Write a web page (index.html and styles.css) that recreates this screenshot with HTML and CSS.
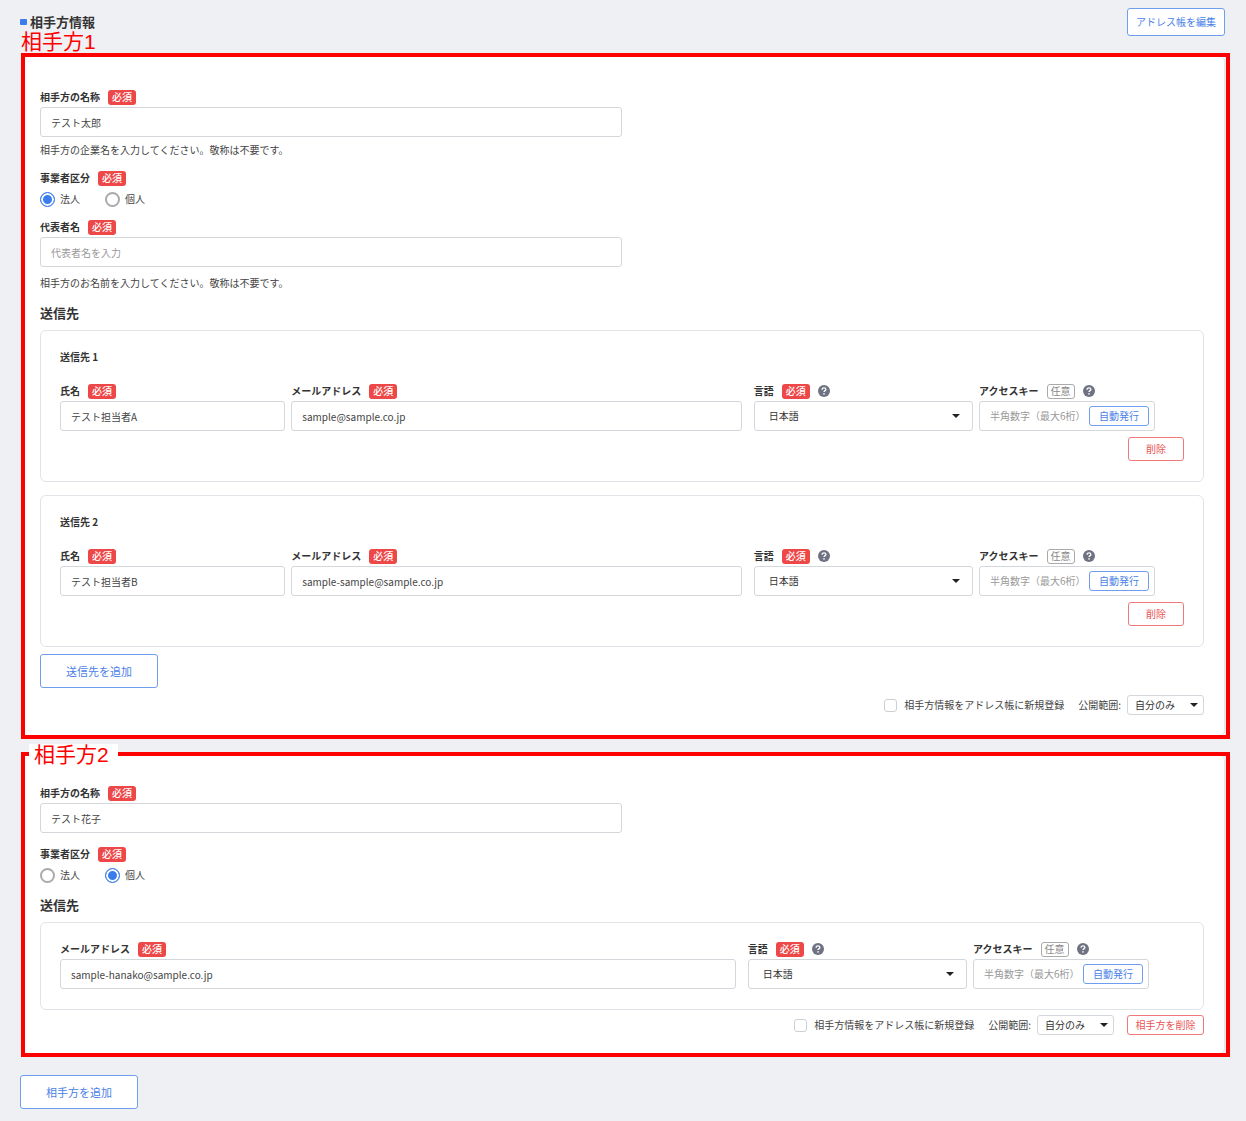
FILE: index.html
```html
<!DOCTYPE html>
<html lang="ja">
<head>
    <meta charset="UTF-8">
    <meta name="viewport" content="width=device-width, initial-scale=1.0">
    <title>相手方情報</title>
    <link rel="stylesheet" href="styles.css">
</head>
<body>
    <svg width="0" height="0" class="defs">
        <symbol id="help" viewBox="0 0 12 12">
            <circle cx="6" cy="6" r="6" fill="#6e7282"/>
            <path d="M4.1 4.7C4.1 3.4 5 2.8 6 2.8s1.9.6 1.9 1.6C7.9 5.6 6 5.7 6 7.1" fill="none" stroke="#fff" stroke-width="1.3"/>
            <circle cx="6" cy="8.9" r=".8" fill="#fff"/>
        </symbol>
    </svg>

    <header class="header">
        <h1>相手方情報</h1>
        <button type="button" class="btn btn-edit">アドレス帳を編集</button>
    </header>

    <main>
        <section class="frame">
            <div class="mark">相手方1</div>
            <form class="card">
                <div class="label-row">
                    <label for="name1">相手方の名称</label><span class="required">必須</span>
                </div>
                <input type="text" id="name1" class="text half" value="テスト太郎">
                <p class="note">相手方の企業名を入力してください。敬称は不要です。</p>

                <div class="label-row next">
                    <span>事業者区分</span><span class="required">必須</span>
                </div>
                <div class="radios">
                    <label><input type="radio" name="kind1" checked>法人</label>
                    <label><input type="radio" name="kind1">個人</label>
                </div>

                <div class="label-row next">
                    <label for="rep1">代表者名</label><span class="required">必須</span>
                </div>
                <input type="text" id="rep1" class="text half" placeholder="代表者名を入力">
                <p class="note note-rep">相手方のお名前を入力してください。敬称は不要です。</p>

                <h2>送信先</h2>
                <div class="box">
                    <h3>送信先 1</h3>
                    <div class="grid">
                        <div>
                            <div class="label-row"><label for="person1">氏名</label><span class="required">必須</span></div>
                            <input type="text" id="person1" class="text" value="テスト担当者A">
                        </div>
                        <div>
                            <div class="label-row"><label for="mail1">メールアドレス</label><span class="required">必須</span></div>
                            <input type="email" id="mail1" class="text" value="sample@sample.co.jp">
                        </div>
                        <div class="lang">
                            <div class="label-row"><label for="lang1">言語</label><span class="required">必須</span><svg class="help"><use href="#help"/></svg></div>
                            <div class="select"><select id="lang1"><option>日本語</option></select></div>
                        </div>
                        <div>
                            <div class="label-row"><label for="key1">アクセスキー</label><span class="optional">任意</span><svg class="help"><use href="#help"/></svg></div>
                            <div class="key"><input type="text" id="key1" placeholder="半角数字（最大6桁）"><button type="button" class="btn">自動発行</button></div>
                        </div>
                    </div>
                    <button type="button" class="btn btn-delete">削除</button>
                </div>

                <div class="box">
                    <h3>送信先 2</h3>
                    <div class="grid">
                        <div>
                            <div class="label-row"><label for="person2">氏名</label><span class="required">必須</span></div>
                            <input type="text" id="person2" class="text" value="テスト担当者B">
                        </div>
                        <div>
                            <div class="label-row"><label for="mail2">メールアドレス</label><span class="required">必須</span></div>
                            <input type="email" id="mail2" class="text" value="sample-sample@sample.co.jp">
                        </div>
                        <div class="lang">
                            <div class="label-row"><label for="lang2">言語</label><span class="required">必須</span><svg class="help"><use href="#help"/></svg></div>
                            <div class="select"><select id="lang2"><option>日本語</option></select></div>
                        </div>
                        <div>
                            <div class="label-row"><label for="key2">アクセスキー</label><span class="optional">任意</span><svg class="help"><use href="#help"/></svg></div>
                            <div class="key"><input type="text" id="key2" placeholder="半角数字（最大6桁）"><button type="button" class="btn">自動発行</button></div>
                        </div>
                    </div>
                    <button type="button" class="btn btn-delete">削除</button>
                </div>

                <button type="button" class="btn btn-add">送信先を追加</button>

                <div class="footer">
                    <label class="check"><input type="checkbox">相手方情報をアドレス帳に新規登録</label>
                    <label for="scope1">公開範囲:</label>
                    <div class="select small"><select id="scope1"><option>自分のみ</option></select></div>
                </div>
            </form>
        </section>

        <section class="frame second">
            <div class="mark">相手方2</div>
            <form class="card">
                <div class="label-row">
                    <label for="name2">相手方の名称</label><span class="required">必須</span>
                </div>
                <input type="text" id="name2" class="text half" value="テスト花子">

                <div class="label-row next">
                    <span>事業者区分</span><span class="required">必須</span>
                </div>
                <div class="radios">
                    <label><input type="radio" name="kind2">法人</label>
                    <label><input type="radio" name="kind2" checked>個人</label>
                </div>

                <h2>送信先</h2>
                <div class="box">
                    <div class="grid grid-personal">
                        <div>
                            <div class="label-row"><label for="mail3">メールアドレス</label><span class="required">必須</span></div>
                            <input type="email" id="mail3" class="text" value="sample-hanako@sample.co.jp">
                        </div>
                        <div class="lang">
                            <div class="label-row"><label for="lang3">言語</label><span class="required">必須</span><svg class="help"><use href="#help"/></svg></div>
                            <div class="select"><select id="lang3"><option>日本語</option></select></div>
                        </div>
                        <div>
                            <div class="label-row"><label for="key3">アクセスキー</label><span class="optional">任意</span><svg class="help"><use href="#help"/></svg></div>
                            <div class="key"><input type="text" id="key3" placeholder="半角数字（最大6桁）"><button type="button" class="btn">自動発行</button></div>
                        </div>
                    </div>
                </div>

                <div class="footer">
                    <label class="check"><input type="checkbox">相手方情報をアドレス帳に新規登録</label>
                    <label for="scope2">公開範囲:</label>
                    <div class="select small"><select id="scope2"><option>自分のみ</option></select></div>
                    <button type="button" class="btn btn-remove">相手方を削除</button>
                </div>
            </form>
        </section>

        <button type="button" class="btn btn-add btn-party">相手方を追加</button>
    </main>
</body>
</html>
```
FILE: styles.css
```css
* {
    box-sizing: border-box;
}

body {
    margin: 0;
    padding: 8px 16px 12px 20px;
    background-color: #eff0f4;
    color: #444;
    font-family: "Noto Sans CJK JP", sans-serif;
    font-size: 10px;
    line-height: 16px;
}

input, select, button {
    font: inherit;
    color: inherit;
}

h1, h2, h3, p {
    margin: 0;
}

.defs {
    position: absolute;
}

.header {
    display: flex;
    justify-content: space-between;
    align-items: center;
    padding-right: 5px;
    margin-bottom: 17px;
}

h1 {
    display: flex;
    align-items: center;
    gap: 3px;
    font-size: 13px;
    color: #333;
}

h1::before {
    content: "";
    width: 7px;
    height: 6px;
    border-radius: 1px;
    background-color: #3b7ded;
}

/* buttons */
.btn {
    display: block;
    padding: 0;
    border: 1px solid #6f9df0;
    border-radius: 3px;
    background-color: white;
    color: #4a7fe8;
    white-space: nowrap;
}

.btn-edit {
    width: 98px;
    height: 28px;
}

.btn-add {
    width: 118px;
    height: 34px;
    margin-top: 7px;
    font-size: 11px;
}

.btn-party {
    margin-top: 18px;
}

.btn-delete {
    width: 56px;
    height: 24px;
    margin: 6px 0 0 auto;
}

.btn-remove {
    width: 77px;
    height: 20px;
    margin-left: 7px;
}

.btn-delete, .btn-remove {
    border-color: #f07878;
    color: #e85555;
}

/* red frames */
.frame {
    position: relative;
    margin-left: 1px;
    border: 4px solid red;
    padding-right: 1px;
}

.second {
    margin-top: 13px;
}

.mark {
    position: absolute;
    left: -4px;
    top: -26px;
    color: red;
    font-family: "Liberation Sans", "Noto Sans CJK JP", sans-serif;
    font-size: 21px;
    line-height: 22px;
    white-space: nowrap;
}

.second .mark {
    left: 4px;
    top: -12px;
    padding: 0 9px 0 5px;
    background-color: white;
}

.card {
    padding: 32px 20px 20px 15px;
    background-color: white;
    border-right: 1px solid #e3e6ea;
    border-radius: 0 5px 5px 0;
}

.second .card {
    padding-top: 29px;
    padding-bottom: 18px;
}

/* form parts */
.label-row {
    display: flex;
    align-items: center;
    gap: 8px;
    height: 16px;
    margin-bottom: 2px;
    font-weight: bold;
    color: #333;
    white-space: nowrap;
}

.next {
    margin-top: 12px;
}

.half + .next {
    margin-top: 13px;
}

.required, .optional {
    width: 28px;
    height: 15px;
    border-radius: 3px;
    background-color: #ed4747;
    color: white;
    font-weight: 500;
    line-height: 14px;
    text-align: center;
}

.optional {
    border: 1px solid #aaa;
    background-color: white;
    color: #888;
    font-weight: normal;
    line-height: 12px;
}

.help {
    width: 12px;
    height: 12px;
}

.text {
    display: block;
    width: 100%;
    height: 30px;
    padding: 0 10px;
    border: 1px solid #d3d6da;
    border-radius: 3px;
    background-color: white;
}

.half {
    width: 50%;
}

::placeholder {
    color: #999;
    opacity: 1;
}

.note {
    margin-top: 5px;
}

.note-rep {
    margin-top: 8px;
}

.radios {
    display: flex;
    gap: 25px;
    height: 16px;
    margin-top: 5px;
}

.radios label {
    display: flex;
    align-items: center;
    gap: 5px;
}

input[type="radio"] {
    appearance: none;
    width: 15px;
    height: 15px;
    margin: 0;
    border: 2px solid #aaa;
    border-radius: 50%;
}

input[type="radio"]:checked {
    border: 1px solid #3b7ded;
    background-color: #3b7ded;
    box-shadow: inset 0 0 0 2px white;
}

h2 {
    margin-top: 12px;
    font-size: 13px;
    line-height: 20px;
    color: #333;
}

.box {
    margin-top: 7px;
    padding: 18px 19px 20px;
    border: 1px solid #e0e3e7;
    border-radius: 6px;
}

.box + .box {
    margin-top: 13px;
}

h3 {
    margin-bottom: 18px;
    font-size: 10px;
    line-height: 16px;
    color: #333;
}

.grid {
    display: grid;
    grid-template-columns: 5fr 10fr 5fr 205px;
    gap: 6px;
}

.grid-personal {
    grid-template-columns: 15fr 5fr 211px;
}

.lang {
    padding-left: 6px;
}

.select {
    position: relative;
}

.select select {
    appearance: none;
    display: block;
    width: 100%;
    height: 30px;
    padding: 0 14px;
    border: 1px solid #d3d6da;
    border-radius: 3px;
    background-color: white;
    color: #333;
}

.select::after {
    content: "";
    position: absolute;
    top: 50%;
    right: 13px;
    margin-top: -2px;
    border: 4px solid transparent;
    border-top-color: #222;
    border-bottom: 0;
    pointer-events: none;
}

.small select {
    width: 77px;
    height: 20px;
    padding: 0 7px;
}

.small::after {
    right: 6px;
}

.key {
    display: flex;
    align-items: center;
    width: 176px;
    height: 30px;
    padding: 0 5px 0 10px;
    border: 1px solid #d3d6da;
    border-radius: 3px;
    background-color: white;
}

.key input {
    flex: 1;
    min-width: 0;
    padding: 0;
    border: 0;
}

.key .btn {
    width: 60px;
    height: 20px;
}

.footer {
    display: flex;
    justify-content: flex-end;
    align-items: center;
    gap: 6px;
    margin-top: 7px;
}

.second .footer {
    margin-top: 5px;
}

.check {
    display: flex;
    align-items: center;
    gap: 7px;
    margin-right: 8px;
}

input[type="checkbox"] {
    appearance: none;
    width: 13px;
    height: 13px;
    margin: 0;
    border: 1px solid #ccd0d5;
    border-radius: 3px;
    background-color: white;
}
```
